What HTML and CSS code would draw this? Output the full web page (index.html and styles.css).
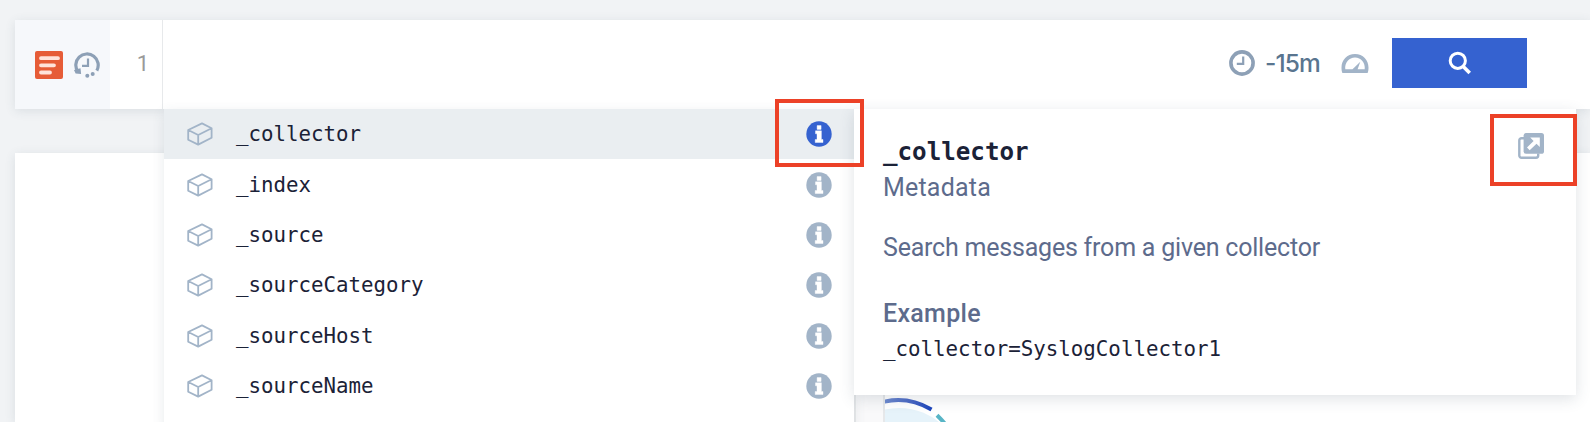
FILE: index.html
```html
<!DOCTYPE html>
<html lang="en">
<head>
<meta charset="utf-8">
<title>Search</title>
<link rel="stylesheet" href="styles.css">
</head>
<body>
<svg class="sprite" aria-hidden="true">
  <symbol id="box" viewBox="0 0 26 24"><path d="M1.2 8 L15 1.4 L24.6 6.2 V15.8 L11.2 22.6 L1.2 17.8 Z M1.2 8 L11.2 13 L24.6 6.2 M11.2 13 V22.6" fill="none" stroke="#a2b4c8" stroke-width="1.8" stroke-linejoin="round"/></symbol>
  <symbol id="info" viewBox="0 0 26 26"><circle cx="13" cy="13" r="12.7" fill="currentColor"/><path d="M11.100 4.600h4v3.800h-4z M9.500 9.800h5.900v8.700h1.600v3H9.200v-3H11v-5.700H9.500z" fill="#fff" stroke="#fff" stroke-width=".4" stroke-linejoin="round"/></symbol>
</svg>
<header class="bar">
  <div class="gutter">
    <svg width="28" height="28" viewBox="0 0 28 28"><rect width="28" height="28" rx="2" fill="#e65c37"/><path d="M6 7.2h17M6 14.3h13M6 21.5h9" stroke="#ffe3da" stroke-width="3.800" stroke-linecap="round"/></svg>
    <svg width="26" height="26" viewBox="0 0 26 26"><g fill="none" stroke="#8da0b6" stroke-width="3.200"><path d="M4 19.800A11.200 11.200 0 1 1 22.800 18.600"/><path d="M14 6.500v7.300H8" stroke-width="2.200"/></g><path d="M0 18l6.500-1.800.6 5.800-5.500-.4z" fill="#8da0b6"/><g fill="#8da0b6"><circle cx="13.300" cy="23.800" r="2"/><circle cx="18.700" cy="22" r="2"/></g></svg>
  </div>
  <div class="line-no">1</div>
  <div class="controls">
    <svg width="26" height="26" viewBox="0 0 26 26"><g fill="none" stroke="#8da0b6"><circle cx="13" cy="13" r="11.100" stroke-width="3.600"/><path d="M14.200 6.500v7.300H7.800" stroke-width="2.200"/></g></svg>
    <span class="range">-15m</span>
    <svg class="gauge" width="28" height="20" viewBox="0 0 28 20"><path fill-rule="evenodd" fill="#a2b4c8" d="M14 0C6 0 .5 6.300.5 13.500c0 2 .2 4 .9 5.500h25.200c.7-1.500.9-3.500.9-5.500C27.500 6.300 22 0 14 0zM4.300 15.300C3.500 9 8 3.500 14 3.500S24.500 9 23.700 15.300H16.600L19.300 7.700 11.500 15.300z"/></svg>
    <button class="go" aria-label="Search"><svg width="24" height="24" viewBox="0 0 24 24" fill="none" stroke="#fff"><circle cx="9.800" cy="9.800" r="7.600" stroke-width="3"/><path d="M15.200 15.400L21.700 22" stroke-width="3.600"/></svg></button>
  </div>
</header>
<main class="card">
  <section class="chart">
    <svg width="100" height="60" viewBox="0 0 100 60"><circle cx="14" cy="74" r="64" fill="#e6f3fa"/><g fill="none" stroke-width="4"><path d="M-1 3.800Q23-2 46.500 11.500" stroke="url(#arc)"/><path d="M52 17.200Q59 24 64 31" stroke="#58b5c6"/></g><defs><linearGradient id="arc"><stop stop-color="#6f8bd0"/><stop offset=".6" stop-color="#4665c4"/><stop offset="1" stop-color="#1c45bb"/></linearGradient></defs></svg>
  </section>
</main>
<div class="suggest">
  <ul class="menu">
    <li class="item active"><svg class="box"><use href="#box"/></svg><span>_collector</span><svg class="info"><use href="#info"/></svg></li>
    <li class="item"><svg class="box"><use href="#box"/></svg><span>_index</span><svg class="info"><use href="#info"/></svg></li>
    <li class="item"><svg class="box"><use href="#box"/></svg><span>_source</span><svg class="info"><use href="#info"/></svg></li>
    <li class="item"><svg class="box"><use href="#box"/></svg><span>_sourceCategory</span><svg class="info"><use href="#info"/></svg></li>
    <li class="item"><svg class="box"><use href="#box"/></svg><span>_sourceHost</span><svg class="info"><use href="#info"/></svg></li>
    <li class="item"><svg class="box"><use href="#box"/></svg><span>_sourceName</span><svg class="info"><use href="#info"/></svg></li>
  </ul>
  <aside class="detail">
    <div>
      <h2>_collector</h2>
      <p class="kind">Metadata</p>
      <p class="desc">Search messages from a given collector</p>
      <h3>Example</h3>
      <code>_collector=SyslogCollector1</code>
    </div>
    <svg class="open" width="26" height="26" viewBox="0 0 26 26"><path d="M6 5.200H3.500a2.200 2.200 0 0 0-2.200 2.200V22.500a2.200 2.200 0 0 0 2.200 2.200H18a2.200 2.200 0 0 0 2.200-2.200V20.500" fill="none" stroke="#a2b4c8" stroke-width="2.400"/><rect x="5.600" y="0" width="20.400" height="20.800" rx="2.600" fill="#a2b4c8"/><path d="M12.200 4.500H21.800V14L18.500 10.800 11.700 17.300 9 14.600 15.600 7.900z" fill="#fff"/></svg>
  </aside>
</div>
<div class="mark mark-info"></div>
<div class="mark mark-open"></div>
</body>
</html>
```

FILE: styles.css
```css
* { box-sizing: border-box; }
body { margin: 0; height: 422px; overflow: hidden; position: relative; padding: 20px 0 0 15px; background: #f1f3f5; font-family: Roboto, "Liberation Sans", sans-serif; }
.sprite { position: absolute; width: 0; height: 0; }
h2, h3, p, ul { margin: 0; padding: 0; }
.bar { display: flex; height: 89px; background: #fff; box-shadow: 0 2px 10px rgba(60, 80, 100, .12); }
.gutter { width: 95px; padding-left: 20px; display: flex; align-items: center; gap: 11px; background: #f6f8fb; }
.line-no { width: 53px; padding: 0 13px 2px 0; border-right: 1px solid #e7e9eb; display: flex; align-items: center; justify-content: flex-end; font-size: 22px; color: #999; }
.controls { margin-left: auto; padding: 0 63px 3px 0; display: flex; align-items: center; }
.range { width: 55px; margin: 0 21px 0 10px; font: 500 24.5px/30px "Inter", sans-serif; letter-spacing: -.9px; color: #59758f; white-space: nowrap; }
.gauge { margin: 1px 23px 0 0; }
.go { width: 135px; height: 50px; padding: 0; border: 0; background: #3562d0; display: flex; align-items: center; justify-content: center; }
.card { height: 269px; margin-top: 44px; padding-left: 839px; background: #fff; box-shadow: 0 2px 10px rgba(60, 80, 100, .12); display: flex; align-items: flex-end; }
.chart { height: 29px; flex: 1; padding-left: 29px; border-left: 2px solid #e9eaec; background: linear-gradient(90deg, #f9f9fa 27px, #e6e8ea 27px 29px, #fff 29px); overflow: hidden; }
.chart svg { display: block; margin-top: 5px; }
.suggest { position: absolute; left: 164px; top: 109px; display: flex; align-items: flex-start; }
.menu { width: 690px; height: 320px; list-style: none; background: #fff; box-shadow: 0 4px 12px rgba(60, 80, 100, .12); }
.item { height: 50.4px; padding: 0 22.5px 0 23px; display: flex; align-items: center; font: 20.75px/50px "DejaVu Sans Mono", monospace; color: #1b2237; }
.item.active { background: #eaeef1; }
.box { width: 26px; height: 24px; margin-right: 23px; }
.info { width: 26px; height: 26px; margin-left: auto; color: #a2b4c8; }
.active .info { color: #3562d0; }
.detail { position: relative; width: 722px; height: 286px; padding: 25px 32px 0 29px; display: flex; justify-content: space-between; background: #fff; box-shadow: 0 4px 14px rgba(60, 80, 100, .16); color: #5d6b8c; }
.open { margin-top: -1px; }
.detail h2 { font: bold 24.2px/36px "DejaVu Sans Mono", monospace; color: #1b2237; }
.kind, .desc { font-size: 25px; line-height: 36px; white-space: nowrap; letter-spacing: .2px; }
.desc { margin-top: 24px; letter-spacing: -.21px; }
.detail h3 { margin-top: 30px; font-size: 25px; line-height: 36px; font-weight: 500; letter-spacing: .3px; }
.detail code { display: block; font: 20.8px/34px "DejaVu Sans Mono", monospace; color: #1b2237; }
.mark { position: absolute; border: 4px solid #ec4127; }
.mark-info { left: 775px; top: 99px; width: 89px; height: 68px; }
.mark-open { left: 1490px; top: 114px; width: 87px; height: 72px; }
```
